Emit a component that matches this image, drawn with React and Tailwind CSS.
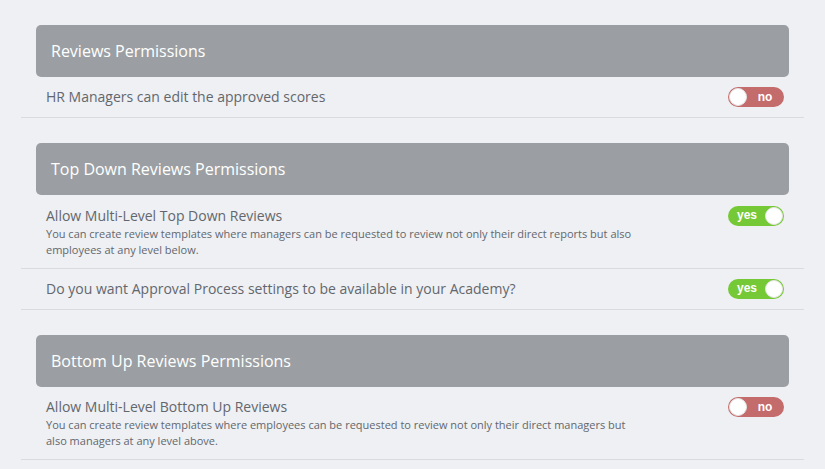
import React, { useState } from "react";

const sections = [
  {
    title: "Reviews Permissions",
    rows: [{ label: "HR Managers can edit the approved scores", on: false }],
  },
  {
    title: "Top Down Reviews Permissions",
    rows: [
      {
        label: "Allow Multi-Level Top Down Reviews",
        desc: "You can create review templates where managers can be requested to review not only their direct reports but also employees at any level below.",
        on: true,
      },
      { label: "Do you want Approval Process settings to be available in your Academy?", on: true },
    ],
  },
  {
    title: "Bottom Up Reviews Permissions",
    rows: [
      {
        label: "Allow Multi-Level Bottom Up Reviews",
        desc: "You can create review templates where employees can be requested to review not only their direct managers but also managers at any level above.",
        on: false,
      },
    ],
  },
];

function Toggle({ value, onChange }) {
  return (
    <button
      onClick={onChange}
      className={`flex items-center w-[56px] h-[20px] rounded-full px-[1px] shrink-0 ${value ? "bg-[#76c936] flex-row-reverse" : "bg-[#c46b6b] flex-row"}`}
    >
      <span className="w-[18px] h-[18px] rounded-full bg-white border border-[#e3e3e3]"></span>
      <span
        className="flex-1 text-center text-white text-[12px] font-bold leading-none pb-[1px]"
        style={{ fontFamily: '"Liberation Sans", Arial, sans-serif' }}
      >
        {value ? "yes" : "no"}
      </span>
    </button>
  );
}

export default function App() {
  const [data, setData] = useState(sections);

  const flip = (s, r) => {
    setData(
      data.map((sec, i) =>
        i != s ? sec : { ...sec, rows: sec.rows.map((row, j) => (j != r ? row : { ...row, on: !row.on })) }
      )
    );
  };

  return (
    <div
      className="w-full min-h-[469px] bg-[#eef0f4] px-[21px] pt-[25px] pb-4 text-[#63676d]"
      style={{ fontFamily: '"Open Sans", "Noto Sans", sans-serif' }}
    >
      <div className="w-[783px] flex flex-col gap-[25px]">
        {data.map((sec, s) => (
          <div key={s}>
            <div className="mx-[15px] h-[52px] rounded-[5px] bg-[#9b9fa3] flex items-center px-[15px] text-white text-[16px]">
              {sec.title}
            </div>
            {sec.rows.map((row, r) => (
              <div
                key={r}
                className={`flex justify-between border-b border-[#d9dbde] pl-[25px] pr-[20px] ${row.desc ? "items-start pt-[10.5px] pb-[10px]" : "items-center h-[41px]"}`}
              >
                <div className="flex flex-col">
                  <div className="text-[14px] leading-[20px]">{row.label}</div>
                  {row.desc && <div className="text-[11px] leading-[16px] w-[600px]">{row.desc}</div>}
                </div>
                <Toggle value={row.on} onChange={() => flip(s, r)} />
              </div>
            ))}
          </div>
        ))}
      </div>
    </div>
  );
}
